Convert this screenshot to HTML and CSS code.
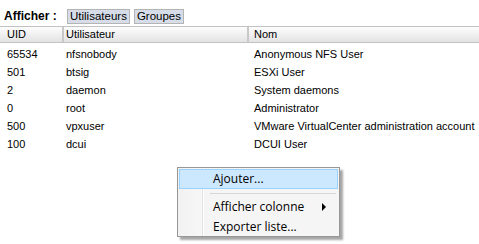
FILE: index.html
```html
<!DOCTYPE html>
<html lang="fr">
<head>
  <meta charset="UTF-8" />
  <title>Utilisateurs</title>
  <link rel="stylesheet" href="styles.css">
</head>
<body>
  <div class="toolbar">
    <span class="label">Afficher :</span>
    <span class="tab">Utilisateurs</span>
    <span class="tab">Groupes</span>
  </div>

  <div class="list">
    <div class="row head">
      <div class="c1">UID</div>
      <div class="c2">Utilisateur</div>
      <div class="c3">Nom</div>
    </div>
    <div class="row"><div class="c1">65534</div><div class="c2">nfsnobody</div><div class="c3">Anonymous NFS User</div></div>
    <div class="row"><div class="c1">501</div><div class="c2">btsig</div><div class="c3">ESXi User</div></div>
    <div class="row"><div class="c1">2</div><div class="c2">daemon</div><div class="c3">System daemons</div></div>
    <div class="row"><div class="c1">0</div><div class="c2">root</div><div class="c3">Administrator</div></div>
    <div class="row"><div class="c1">500</div><div class="c2">vpxuser</div><div class="c3">VMware VirtualCenter administration account</div></div>
    <div class="row"><div class="c1">100</div><div class="c2">dcui</div><div class="c3">DCUI User</div></div>
  </div>

  <div class="menu">
    <div class="item hover">Ajouter...</div>
    <div class="sep"></div>
    <div class="item">Afficher colonne <span class="arrow"></span></div>
    <div class="item">Exporter liste...</div>
  </div>
</body>
</html>
```
FILE: styles.css
```css
* {
  box-sizing: border-box;
}

body {
  margin: 0;
  background: #fff;
  font-family: "Liberation Sans", Arial, sans-serif;
  font-size: 11px;
  color: #000;
  position: relative;
  width: 479px;
  height: 244px;
  overflow: hidden;
}

.toolbar {
  display: flex;
  align-items: center;
  gap: 4px;
  padding: 6px 0 0 4px;
  height: 26px;
}

.label {
  font-weight: bold;
  font-size: 12px;
  width: 59px;
}

.tab {
  background: #d6dde8;
  border: 1px solid #b4b4b4;
  height: 15px;
  line-height: 13px;
  padding: 0 2px;
  font-size: 11.5px;
}

.row {
  display: flex;
  height: 18px;
  line-height: 18px;
}

.row.head {
  height: 17px;
  line-height: 15px;
  border-top: 1px solid #c2c2c2;
  border-bottom: 1px solid #c2c2c2;
  background: linear-gradient(#fdfdfd, #e3e3e3);
  margin-bottom: 2px;
}

.c1 {
  flex: 0 0 62px;
  padding-left: 7px;
}

.c2 {
  flex: 0 0 185px;
  padding-left: 4px;
}

.c3 {
  flex: 1;
  min-width: 0;
  padding-left: 7px;
  white-space: nowrap;
}

.head .c2,
.head .c3 {
  border-left: 2px solid #c8c8c8;
}

.head .c2 {
  padding-left: 2px;
}

.head .c3 {
  padding-left: 5px;
}

.menu {
  position: absolute;
  left: 177px;
  top: 167px;
  width: 163px;
  height: 70px;
  border: 1px solid #979797;
  background: linear-gradient(to right, #f1f1f1 0, #f7f7f7 24px, #e2e3e3 24px, #e2e3e3 25px, #fff 25px, #fff 26px, #f5f5f5 26px);
  box-shadow: 3px 3px 2px rgba(0,0,0,0.35);
  padding: 1px;
  font-family: "Open Sans", sans-serif;
  font-size: 12px;
}

.menu .item {
  position: relative;
  height: 20px;
  line-height: 19px;
  padding-left: 34px;
}

.menu .item.hover {
  background: #cce8ff;
  border: 1px solid #99d1ff;
  padding-left: 33px;
  line-height: 17px;
}

.menu .sep {
  height: 1px;
  margin: 4px 2px 3px 31px;
  background: #d7d7d7;
}

.arrow {
  position: absolute;
  right: 12px;
  top: 6px;
  border-left: 4px solid #000;
  border-top: 4px solid transparent;
  border-bottom: 4px solid transparent;
}
```
